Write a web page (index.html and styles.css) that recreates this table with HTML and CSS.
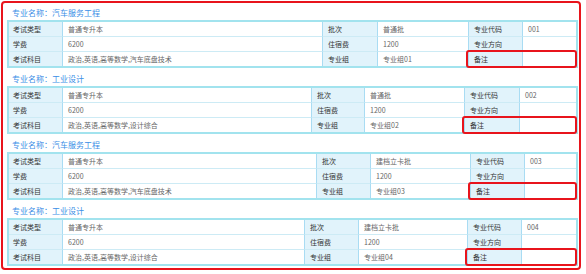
FILE: index.html
```html
<!DOCTYPE html>
<html lang="zh-CN">
<head>
<meta charset="utf-8">
<title>专业信息</title>
<link rel="stylesheet" href="styles.css">
</head>
<body>
<div class="panel">

  <section class="major major-first">
    <div class="major-title">专业名称：汽车服务工程</div>
    <div class="grid-wrap">
      <table class="info">
        <colgroup><col class="w53"><col class="w260"><col class="w55"><col class="w91"><col class="w54"><col></colgroup>
        <tr><td class="lbl">考试类型</td><td>普通专升本</td><td class="lbl">批次</td><td>普通批</td><td class="lbl">专业代码</td><td>001</td></tr>
        <tr><td class="lbl">学费</td><td>6200</td><td class="lbl">住宿费</td><td>1200</td><td class="lbl">专业方向</td><td></td></tr>
        <tr><td class="lbl">考试科目</td><td>政治,英语,高等数学,汽车底盘技术</td><td class="lbl">专业组</td><td>专业组01</td><td class="lbl">备注</td><td></td></tr>
      </table>
      <span class="mark mark-111"></span>
    </div>
  </section>

  <section class="major">
    <div class="major-title">专业名称：工业设计</div>
    <div class="grid-wrap">
      <table class="info">
        <colgroup><col class="w53"><col class="w249"><col class="w53"><col class="w100"><col class="w55"><col></colgroup>
        <tr><td class="lbl">考试类型</td><td>普通专升本</td><td class="lbl">批次</td><td>普通批</td><td class="lbl">专业代码</td><td>002</td></tr>
        <tr><td class="lbl">学费</td><td>6200</td><td class="lbl">住宿费</td><td>1200</td><td class="lbl">专业方向</td><td></td></tr>
        <tr><td class="lbl">考试科目</td><td>政治,英语,高等数学,设计综合</td><td class="lbl">专业组</td><td>专业组02</td><td class="lbl">备注</td><td></td></tr>
      </table>
      <span class="mark mark-115"></span>
    </div>
  </section>

  <section class="major">
    <div class="major-title">专业名称：汽车服务工程</div>
    <div class="grid-wrap">
      <table class="info">
        <colgroup><col class="w53"><col class="w254"><col class="w54"><col class="w100"><col class="w54"><col></colgroup>
        <tr><td class="lbl">考试类型</td><td>普通专升本</td><td class="lbl">批次</td><td>建档立卡批</td><td class="lbl">专业代码</td><td>003</td></tr>
        <tr><td class="lbl">学费</td><td>6200</td><td class="lbl">住宿费</td><td>1200</td><td class="lbl">专业方向</td><td></td></tr>
        <tr><td class="lbl">考试科目</td><td>政治,英语,高等数学,汽车底盘技术</td><td class="lbl">专业组</td><td>专业组03</td><td class="lbl">备注</td><td></td></tr>
      </table>
      <span class="mark mark-109"></span>
    </div>
  </section>

  <section class="major">
    <div class="major-title">专业名称：工业设计</div>
    <div class="grid-wrap">
      <table class="info">
        <colgroup><col class="w53"><col class="w242"><col class="w54"><col class="w109"><col class="w54"><col></colgroup>
        <tr><td class="lbl">考试类型</td><td>普通专升本</td><td class="lbl">批次</td><td>建档立卡批</td><td class="lbl">专业代码</td><td>004</td></tr>
        <tr><td class="lbl">学费</td><td>6200</td><td class="lbl">住宿费</td><td>1200</td><td class="lbl">专业方向</td><td></td></tr>
        <tr><td class="lbl">考试科目</td><td>政治,英语,高等数学,设计综合</td><td class="lbl">专业组</td><td>专业组04</td><td class="lbl">备注</td><td></td></tr>
      </table>
      <span class="mark mark-112"></span>
    </div>
  </section>

</div>
</body>
</html>
```

FILE: styles.css
```css
* { box-sizing: border-box; }

html, body {
  margin: 0;
  padding: 0;
  background: #ffffff;
}

body {
  font-family: "Noto Sans CJK SC", "Noto Sans", sans-serif;
}

.panel {
  width: 580px;
  margin: 1px 0 0 1px;
  padding: 0 1px 2px 4px;
  border: 2px solid #e8141c;
  border-radius: 4px;
  background: #ffffff;
}

.major-title {
  height: 18px;
  padding: 3px 0 0 5px;
  line-height: 15px;
  font-size: 8px;
  color: #3a8ee6;
  white-space: nowrap;
}

.major-first .major-title {
  height: 17px;
  padding-top: 2px;
}

.grid-wrap {
  position: relative;
  width: 571px;
}

.info {
  width: 571px;
  table-layout: fixed;
  border-collapse: separate;
  border-spacing: 0;
  border: 2px solid #a2e3ee;
  font-size: 7px;
  color: #666666;
}

.info td {
  height: 14px;
  padding: 0 0 0 5px;
  line-height: 14px;
  white-space: nowrap;
  overflow: hidden;
  border-left: 1px solid #a9dcf3;
  border-top: 1px solid #cdebf5;
}

.info tr:first-child td { border-top: none; }
.info td:first-child { border-left: none; padding-left: 4px; }

.info td.lbl {
  background: #e1f3fb;
  color: #333333;
}

.w53 { width: 53px; }
.w54 { width: 54px; }
.w55 { width: 55px; }
.w91 { width: 91px; }
.w100 { width: 100px; }
.w109 { width: 109px; }
.w242 { width: 242px; }
.w249 { width: 249px; }
.w254 { width: 254px; }
.w260 { width: 260px; }

.mark {
  position: absolute;
  right: 1px;
  bottom: 0;
  height: 18px;
  border: 2px solid #e8141c;
  border-radius: 3px;
}

.mark-109 { width: 109px; }
.mark-111 { width: 111px; }
.mark-112 { width: 112px; }
.mark-115 { width: 115px; }
```
